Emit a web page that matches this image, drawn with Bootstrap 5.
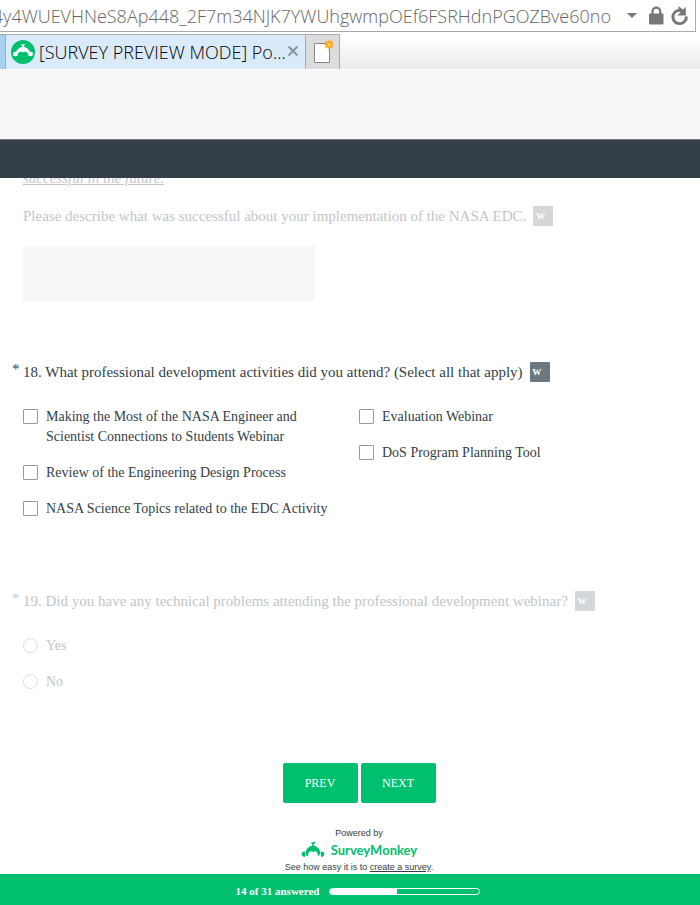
<!DOCTYPE html>
<html lang="en">
<head>
<meta charset="utf-8">
<meta name="viewport" content="width=device-width, initial-scale=1">
<title>[SURVEY PREVIEW MODE]</title>
<link href="https://cdn.jsdelivr.net/npm/bootstrap@5.3.0/dist/css/bootstrap.min.css" rel="stylesheet">
<style>
  body { font-family: "Liberation Serif", "Times New Roman", serif; font-size: 14px; line-height: 20px; color: #333e48; background: #fff; }
  .chrome { font-family: "Open Sans", "Segoe UI", sans-serif; }
  .address { height: 32px; margin-right: 4px; padding-right: 6px; border: solid #aaa; border-width: 0 1px 1px 0; }
  .address-url { flex: 1 1 0; min-width: 0; color: #666; font-size: 18px; font-weight: 300; line-height: 32px; }
  .icon-btn { padding: 0; border: 0; background: none; line-height: 0; }
  .tab-strip { height: 38px; padding-top: 2px; background: linear-gradient(#fff 15%, #ebebeb 92%); border-bottom: 1px solid #fff; }
  .tab-prev { width: 6px; background: #a9d0ee; border-top: 1px solid #aaa; border-right: 1px solid #aaa; }
  .tab-current { width: 300px; padding: 0 6px 0 5px; color: #000; background: #d9ebfb; border: solid #aaa; border-width: 1px 1px 0 0; font-size: 18px; font-weight: 300; line-height: 36px; }
  .tab-close { margin-bottom: 2px; }
  .tab-new { width: 34px; background: #dcdcdc; border: solid #aaa; border-width: 1px 1px 0 0; }
  .toolbar-band { height: 69px; background: #f7f7f7; }
  .survey-bar { height: 39px; background: #333e48; border-top: 1px solid #777; }
  .survey { padding: 0 5px 0 23px; }
  .cut-line { height: 8px; font-size: 15px; line-height: 16px; }
  .faded { color: #c2c5c8; }
  .question { font-size: 15px; line-height: 20px; }
  .required-mark { width: 11px; margin-left: -11px; line-height: 14px; }
  .word-tag { width: 20px; height: 20px; margin-left: 7px; padding-left: 3px; color: #fff; background: #6b787f; border-radius: 1px; font-size: 12px; font-weight: 700; line-height: 19px; }
  .faded .word-tag { background: #d3d7da; }
  .answer-box { width: 292px; height: 56px; margin-top: 20px; border: 0; background: #f7f7f7; resize: none; }
  .gap-q { margin-top: 60px; }
  .gap-q-lg { margin-top: 72px; }
  .gap-nav { margin-top: 71px; }
  .choices { margin-top: 25px; }
  .choice { gap: 8px; }
  .choice input { appearance: none; flex: none; width: 15px; height: 15px; margin: 2px 0 0; border: 1px solid #999; border-radius: 1px; background: #fff; }
  .choice input[type=radio] { border-color: #ddd; border-radius: 50%; }
  .nav-btn { width: 75px; height: 40px; padding: 0; color: #fff; background: #00bf6f; border: 0; border-radius: 2px; font-size: 12px; }
  .nav-btn:hover { color: #fff; background: #00a862; }
  .nav-gap { gap: 3px; }
  .credits { margin-top: 23px; font-family: "Liberation Sans", Arial, sans-serif; font-size: 9px; line-height: 14px; }
  .brand { gap: 6px; }
  .brand-name { color: #00bf6f; font-family: "Lato", sans-serif; font-size: 13px; font-weight: 700; line-height: 20px; }
  .status { height: 31px; padding-top: 7px; color: #fff; background: #00bf6f; font-size: 11px; font-weight: 700; }
  .status-track { width: 151px; height: 7px; border: 1px solid #fff; border-radius: 4px; background: transparent; }
  .status-fill { background: #fff; }
  .status-row { gap: 10px; }
</style>
<script src="https://cdn.jsdelivr.net/npm/bootstrap@5.3.0/dist/js/bootstrap.bundle.min.js"></script>
</head>
<body class="d-flex flex-column min-vh-100">
<header class="chrome">
  <div class="address d-flex align-items-center bg-white">
    <div class="address-url d-flex justify-content-end overflow-hidden text-nowrap"><span>4y4WUEVHNeS8Ap448_2F7m34NJK7YWUhgwmpOEf6FSRHdnPGOZBve60no</span></div>
    <button class="icon-btn ms-3" type="button" aria-label="Show addresses"><svg width="10" height="6"><path d="M0 0h10L5 5z" fill="#777"/></svg></button>
    <svg class="ms-2 flex-shrink-0" width="24" height="20" viewBox="0 0 24 20" role="img" aria-label="Secure"><path d="M7.500 9V5.500a3.900 3.900 0 0 1 7.800 0V9" fill="none" stroke="#777" stroke-width="2.200"/><rect x="4" y="7.500" width="14.500" height="11" rx="1" fill="#777"/></svg>
    <button class="icon-btn" type="button" aria-label="Refresh"><svg width="20" height="20" viewBox="0 0 20 20"><path d="M17.300 10.500A6.700 6.700 0 1 1 10 4.300" fill="none" stroke="#777" stroke-width="2.900"/><path d="M9.500 0l4.300 3.600 3-2.600V9.500H8.500l3-3.200-2-1z" fill="#777"/></svg></button>
  </div>
  <div class="tab-strip d-flex">
    <div class="tab-prev"></div>
    <div class="tab-current d-flex align-items-center">
      <svg class="flex-shrink-0" width="24" height="24" viewBox="0 0 24 24" aria-hidden="true"><circle cx="12" cy="12" r="12" fill="#00bf6f"/><path d="M4.500 14.500C5.500 4.500 18.500 4.500 19.500 14.500L17.500 16C17.500 12 14.500 11 12 12.500 9.500 11 6.500 12 6.500 16z" fill="#fff"/><circle cx="4.200" cy="14" r="2.200" fill="#fff"/><circle cx="19.800" cy="14" r="2.200" fill="#fff"/><path d="M12 8V5.500l-1.500-.8M12 6l1.500-1.500" fill="none" stroke="#fff" stroke-width="1.500"/></svg>
      <span class="ms-1 flex-grow-1 text-nowrap">[SURVEY PREVIEW MODE] Po...</span>
      <button class="icon-btn tab-close" type="button" aria-label="Close tab"><svg width="12" height="12" viewBox="0 0 12 12"><path d="M1.500 1.500l9 9m0-9l-9 9" stroke="#8b949c" stroke-width="2"/></svg></button>
    </div>
    <button class="tab-new icon-btn d-flex justify-content-center align-items-center" type="button" aria-label="New tab"><svg width="22" height="26" viewBox="0 0 22 26"><path d="M2.500 4.500h15v19h-15z" fill="#fff" stroke="#888"/><path d="M17 0l1.200 2.700L21 1.500l-1 2.800 2 1.200-2 1.200 1 2.800-2.800-1.200L17 11l-1.200-2.700L13 9.500l1-2.800-2-1.200 2-1.200-1-2.800 2.800 1.200z" fill="#f9a51a"/><circle cx="17" cy="5.500" r="2" fill="#ffd04a"/></svg></button>
  </div>
  <div class="toolbar-band"></div>
</header>
<div class="survey-bar"></div>
<main class="survey">
  <section class="faded">
    <div class="cut-line d-flex align-items-end overflow-hidden"><em class="text-decoration-underline">successful in the future.</em></div>
    <label class="question d-flex mt-3 pt-1" for="success">Please describe what was successful about your implementation of the NASA EDC. <span class="word-tag">w</span></label>
    <textarea class="answer-box d-block" id="success"></textarea>
  </section>
  <section class="gap-q" role="group" aria-labelledby="q18">
    <div class="question d-flex" id="q18"><span class="required-mark">*</span><span>18. What professional development activities did you attend? (Select all that apply)</span><span class="word-tag">w</span></div>
    <div class="choices row g-0">
      <div class="col-6 d-flex flex-column gap-3">
        <label class="choice d-flex pe-4"><input type="checkbox"><span>Making the Most of the NASA Engineer and Scientist Connections to Students Webinar</span></label>
        <label class="choice d-flex"><input type="checkbox"><span>Review of the Engineering Design Process</span></label>
        <label class="choice d-flex"><input type="checkbox"><span>NASA Science Topics related to the EDC Activity</span></label>
      </div>
      <div class="col-6 d-flex flex-column gap-3">
        <label class="choice d-flex"><input type="checkbox"><span>Evaluation Webinar</span></label>
        <label class="choice d-flex"><input type="checkbox"><span>DoS Program Planning Tool</span></label>
      </div>
    </div>
  </section>
  <section class="gap-q-lg faded" role="radiogroup" aria-labelledby="q19">
    <div class="question d-flex" id="q19"><span class="required-mark">*</span><span>19. Did you have any technical problems attending the professional development webinar?</span><span class="word-tag">w</span></div>
    <div class="choices d-flex flex-column gap-3">
      <label class="choice d-flex"><input type="radio" name="technical"><span>Yes</span></label>
      <label class="choice d-flex"><input type="radio" name="technical"><span>No</span></label>
    </div>
  </section>
  <div class="gap-nav d-flex justify-content-center nav-gap">
    <button class="btn nav-btn" type="button">PREV</button>
    <button class="btn nav-btn" type="button">NEXT</button>
  </div>
  <div class="credits text-center">
    <div>Powered by</div>
    <div class="brand d-flex justify-content-center align-items-center">
      <svg width="24" height="18" viewBox="0 0 24 18" aria-hidden="true"><path d="M4.500 12.500C5.500 2 18.500 2 19.500 12.500L17 15.500C17 10.500 14.500 9.500 12 11 9.500 9.500 7 10.500 7 15.500L4.500 14z" fill="#00bf6f"/><path d="M4 10.500a2.700 2.700 0 1 0 0 5.200zM20 10.500a2.700 2.700 0 1 1 0 5.200z" fill="#00bf6f"/><path d="M12 5V2.500L10.500 1.500M12 3l2-2" fill="none" stroke="#00bf6f" stroke-width="1.600"/></svg>
      <span class="brand-name">SurveyMonkey</span>
    </div>
    <div>See how easy it is to <a class="text-reset" href="#">create a survey</a>.</div>
  </div>
</main>
<footer class="status mt-auto">
  <div class="status-row d-flex justify-content-center align-items-center ms-3">
    <span>14 of 31 answered</span>
    <div class="progress status-track" role="progressbar" aria-label="Survey progress" aria-valuenow="14" aria-valuemin="0" aria-valuemax="31"><div class="progress-bar status-fill" style="width:45%"></div></div>
  </div>
</footer>
</body>
</html>
